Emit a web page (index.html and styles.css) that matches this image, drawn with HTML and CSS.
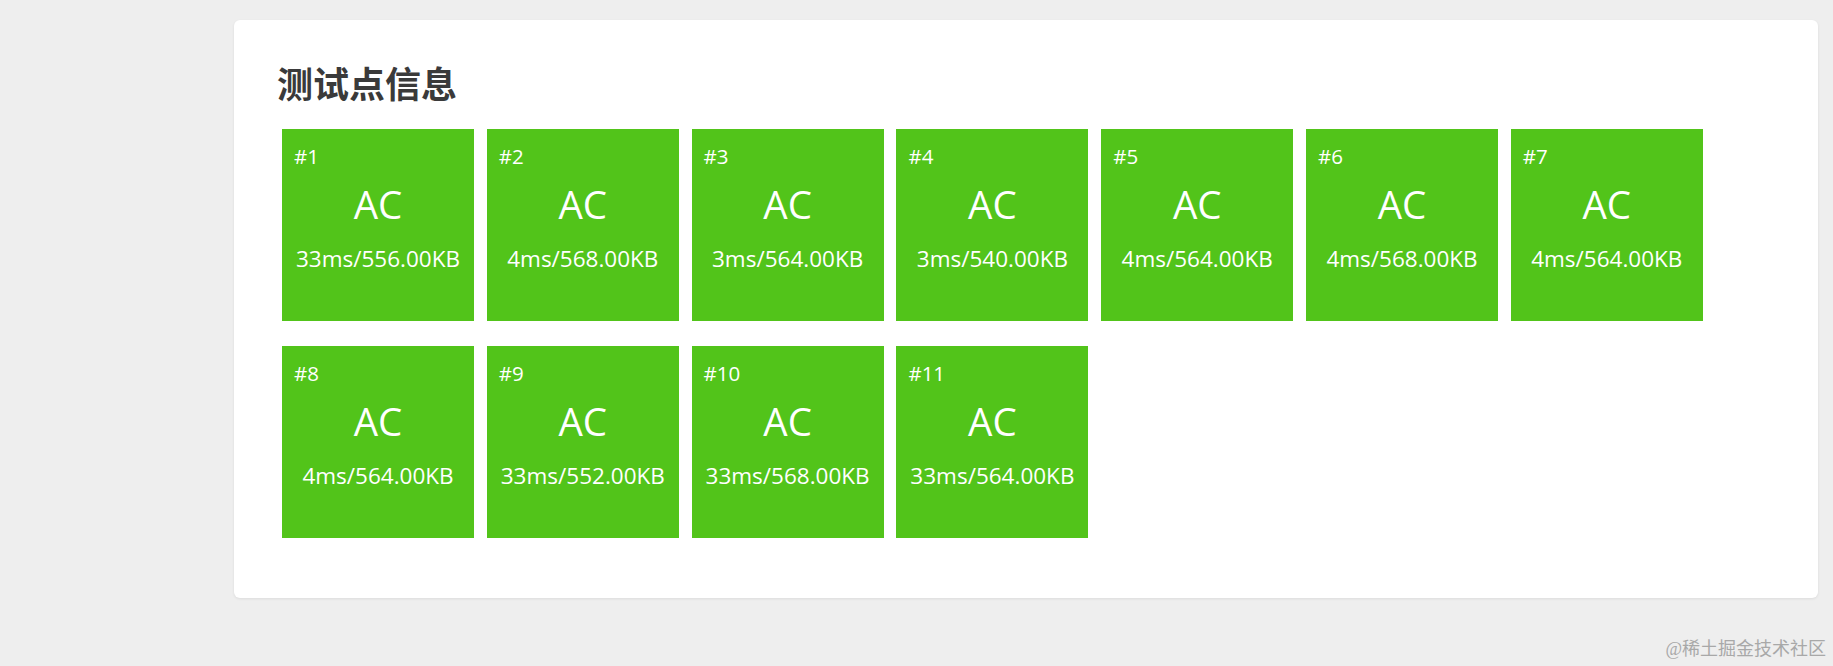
FILE: index.html
```html
<!DOCTYPE html>
<html lang="zh-CN">
<head>
<meta charset="utf-8">
<title>测试点信息</title>
<link rel="stylesheet" href="styles.css">
</head>
<body>
<div class="card">
  <h2 class="title">测试点信息</h2>
  <div class="cases">
    <div class="case"><div class="num">#1</div><div class="status">AC</div><div class="usage">33ms/556.00KB</div></div>
    <div class="case"><div class="num">#2</div><div class="status">AC</div><div class="usage">4ms/568.00KB</div></div>
    <div class="case"><div class="num">#3</div><div class="status">AC</div><div class="usage">3ms/564.00KB</div></div>
    <div class="case"><div class="num">#4</div><div class="status">AC</div><div class="usage">3ms/540.00KB</div></div>
    <div class="case"><div class="num">#5</div><div class="status">AC</div><div class="usage">4ms/564.00KB</div></div>
    <div class="case"><div class="num">#6</div><div class="status">AC</div><div class="usage">4ms/568.00KB</div></div>
    <div class="case"><div class="num">#7</div><div class="status">AC</div><div class="usage">4ms/564.00KB</div></div>
    <div class="case"><div class="num">#8</div><div class="status">AC</div><div class="usage">4ms/564.00KB</div></div>
    <div class="case"><div class="num">#9</div><div class="status">AC</div><div class="usage">33ms/552.00KB</div></div>
    <div class="case"><div class="num">#10</div><div class="status">AC</div><div class="usage">33ms/568.00KB</div></div>
    <div class="case"><div class="num">#11</div><div class="status">AC</div><div class="usage">33ms/564.00KB</div></div>
  </div>
</div>
<div class="watermark">@稀土掘金技术社区</div>
</body>
</html>
```
FILE: styles.css
```css
html, body {
  margin: 0;
  padding: 0;
}
body {
  background: #eeeeee;
  font-family: "Open Sans", "Noto Sans CJK SC", sans-serif;
  width: 1833px;
  height: 666px;
  overflow: hidden;
}
.card {
  margin: 20px 0 0 234px;
  width: 1584px;
  height: 578px;
  box-sizing: border-box;
  padding: 40px 0 0 43px;
  background: #ffffff;
  border-radius: 6px;
  box-shadow: 0 1px 3px rgba(0, 0, 0, 0.08);
}
.title {
  margin: 0 0 25px 0;
  font-family: "Noto Sans CJK SC", sans-serif;
  font-weight: 700;
  font-size: 36px;
  line-height: 44px;
  color: #3a3a3a;
}
.cases {
  display: flex;
  flex-wrap: wrap;
  column-gap: 12.8px;
  row-gap: 25px;
  padding-left: 5px;
  width: 1450px;
}
.case {
  width: 192px;
  height: 192px;
  box-sizing: border-box;
  padding-top: 14px;
  background: #52c41a;
  color: #ffffff;
  font-family: "Open Sans", sans-serif;
}
.num {
  padding-left: 12px;
  font-size: 20.5px;
  line-height: 27px;
}
.status {
  margin-top: 8px;
  text-align: center;
  font-size: 38.5px;
  line-height: 52px;
}
.usage {
  margin-top: 14px;
  text-align: center;
  font-size: 22.5px;
  line-height: 29px;
}
.watermark {
  margin: 42px 7px 0 0;
  text-align: right;
  font-family: "Liberation Serif", "Noto Sans CJK SC", serif;
  font-size: 18px;
  line-height: 18px;
  color: #a8a8a8;
}
```
